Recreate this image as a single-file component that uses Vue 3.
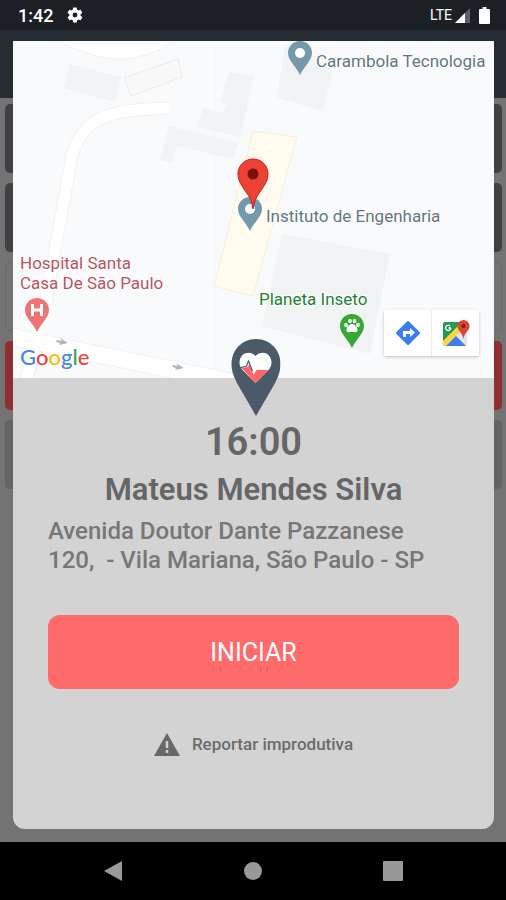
<template>
  <div class="screen">
    <!-- 系统状态栏 -->
    <header class="status-bar">
      <div class="status-group">
        <span class="clock">1:42</span>
        <svg class="gear" viewBox="0 0 24 24" aria-hidden="true">
          <path d="M19.4 13a7.5 7.5 0 0 0 0-2l2.1-1.6a.5.5 0 0 0 .1-.7l-2-3.4a.5.5 0 0 0-.6-.2l-2.5 1a7.3 7.3 0 0 0-1.7-1l-.4-2.6a.5.5 0 0 0-.5-.5h-4a.5.5 0 0 0-.5.5L9 5.1a7.3 7.3 0 0 0-1.7 1l-2.5-1a.5.5 0 0 0-.6.2l-2 3.4a.5.5 0 0 0 .1.7L4.5 11a7.5 7.5 0 0 0 0 2l-2.1 1.6a.5.5 0 0 0-.1.7l2 3.4c.1.2.4.3.6.2l2.5-1a7.3 7.3 0 0 0 1.7 1l.4 2.6c0 .3.2.5.5.5h4c.3 0 .5-.2.5-.5l.4-2.6a7.3 7.3 0 0 0 1.7-1l2.5 1c.2.1.5 0 .6-.2l2-3.4a.5.5 0 0 0-.1-.7zM12 15.2a3.2 3.2 0 1 1 0-6.4 3.2 3.2 0 0 1 0 6.4z" />
        </svg>
      </div>
      <div class="status-group right">
        <span class="network">LTE</span>
        <svg class="signal" viewBox="0 0 15 15" aria-hidden="true">
          <path d="M15 0V15H0z" fill="#5c6063" />
          <path d="M10 5V15H0z" fill="#fff" />
        </svg>
        <svg class="battery" viewBox="0 0 11 17" aria-hidden="true">
          <path d="M3.5 0h4v2H10a1 1 0 0 1 1 1v13a1 1 0 0 1-1 1H1a1 1 0 0 1-1-1V3a1 1 0 0 1 1-1h2.5z" fill="#fff" />
        </svg>
      </div>
    </header>

    <main class="stage">
      <!-- 弹窗后面的列表 -->
      <div class="backdrop" aria-hidden="true">
        <div class="app-bar"></div>
        <div class="rows">
          <div v-for="(row, index) in rows" :key="index" class="row" :class="row"></div>
        </div>
      </div>

      <!-- 预约弹窗 -->
      <section class="modal">
        <div class="map">
          <svg class="map-canvas" viewBox="0 0 481 337" role="img" aria-label="Mapa">
            <defs>
              <!-- 通用地点标记，尖端位于 (12, 34) -->
              <path id="poi" d="M12 0C5.3 0 0 5.2 0 11.8c0 4.6 2.2 7.6 5.2 11.6 2.8 3.7 5 6.6 6.8 10.6 1.8-4 4-6.9 6.8-10.6 3-4 5.2-7 5.2-11.6C24 5.2 18.7 0 12 0z" />
            </defs>
            <rect width="481" height="337" fill="#f8fafb" />

            <!-- 建筑 -->
            <g fill="#f1f3f4">
              <path d="M57 23l51 13-6 25-51-14z" />
              <path d="M216 31l25 4-14 61-43-10 6-19 20 5 4-9-7-2z" />
              <path d="M156 85l69 17-5 16-56-13-5 17-12-3z" />
              <path d="M272 4l48 24-10 42-46-13z" />
              <path d="M269 193l108 20-20 100-108-28z" />
            </g>
            <path d="M111 37l54-19 4 18-51 19z" fill="#f9f9f9" stroke="#ebebeb" />
            <path d="M240 90l44 6-44 159-39-10z" fill="#fffbee" stroke="#f6eeda" />

            <!-- 道路 -->
            <path d="M202 6V337" stroke="#f3f5f6" fill="none" />
            <g fill="none" stroke="#f0f1f2">
              <path d="M156 67c-60 2-85 8-97 47-8 46-16 90-26 145" stroke-width="13" />
              <path d="M-5 295l240 49" stroke-width="18" />
              <path d="M26 295L12 345" stroke-width="14" />
            </g>
            <g fill="none" stroke="#fff">
              <path d="M156 67c-60 2-85 8-97 47-8 46-16 90-26 145l-11 45-10 41" stroke-width="11" />
              <path d="M-5 295l240 49" stroke-width="16" />
            </g>
            <path d="M52 4c20 7 32 14 54 14s35-7 50-14z" fill="#fff" />
            <path d="M52 4c20 7 32 14 54 14s35-7 50-14" fill="none" stroke="#eff0f1" />
            <g fill="#aeb5bd">
              <path d="M44 299l5 1-2-3 8 5-9 2 1-2-4-1z" />
              <path d="M160 324l5 1-2-3 8 5-9 2 1-2-4-1z" />
            </g>

            <!-- 地点标记 -->
            <g transform="translate(275 0)">
              <use href="#poi" fill="#7499aa" />
              <circle cx="12" cy="12" r="5" fill="#fff" />
            </g>
            <g transform="translate(225 156)">
              <use href="#poi" fill="#7499aa" />
              <circle cx="12" cy="12" r="5" fill="#fff" />
            </g>
            <g transform="translate(12 257)">
              <use href="#poi" fill="#ef7476" />
              <path d="M7.5 6v12M16.5 6v12M7.5 12h9" fill="none" stroke="#fff" stroke-width="3" />
            </g>
            <g transform="translate(327 273)">
              <use href="#poi" fill="#36a933" />
              <g fill="#fff">
                <ellipse cx="6" cy="11" rx="1.8" ry="2.3" />
                <ellipse cx="10" cy="7" rx="1.8" ry="2.3" />
                <ellipse cx="14.5" cy="7" rx="1.8" ry="2.3" />
                <ellipse cx="18" cy="11" rx="1.8" ry="2.3" />
                <path d="M12 10c-3 0-6 4-5.5 6.5.4 2.5 3 1.5 5.5 1.5s5.1 1 5.5-1.5C18 14 15 10 12 10z" />
              </g>
            </g>
            <path d="M240 118c-9 0-15 7-15 15 0 7 4 12 8 18 4 5 6 10 7 17 1-7 3-12 7-17 4-6 8-11 8-18 0-8-6-15-15-15z" fill="#ea4335" stroke="#c5221f" />
            <circle cx="240" cy="133" r="5.5" fill="#7d110c" />

            <!-- 地点名称 -->
            <g class="labels">
              <text x="303" y="26" fill="#5f7680">Carambola Tecnologia</text>
              <text x="253" y="181" fill="#5f7680">Instituto de Engenharia</text>
              <text x="7" y="228" fill="#b9545c">Hospital Santa</text>
              <text x="7" y="248" fill="#b9545c">Casa De São Paulo</text>
              <text x="246" y="264" fill="#1f8132">Planeta Inseto</text>
            </g>
            <text class="google" x="7" y="324"><tspan fill="#4285f4">G</tspan><tspan fill="#ea4335">o</tspan><tspan fill="#fbbc05">o</tspan><tspan fill="#4285f4">g</tspan><tspan fill="#34a853">l</tspan><tspan fill="#ea4335">e</tspan></text>
          </svg>

          <div class="map-tools">
            <button type="button" class="map-tool" aria-label="Rotas">
              <svg viewBox="0 0 26 26" aria-hidden="true">
                <path d="M12 1.4a1.4 1.4 0 0 1 2 0L24.6 12a1.4 1.4 0 0 1 0 2L14 24.6a1.4 1.4 0 0 1-2 0L1.4 14a1.4 1.4 0 0 1 0-2z" fill="#3b7ded" />
                <path d="M8 17v-6h7V8l5 4.5-5 4.5v-3h-4v3z" fill="#fff" />
              </svg>
            </button>
            <button type="button" class="map-tool" aria-label="Abrir no Google Maps">
              <svg viewBox="0 0 28 28" aria-hidden="true">
                <rect x="1" y="3" width="24" height="24" rx="2" fill="#e3e6ea" />
                <path d="M3 3h19L1 24V5a2 2 0 0 1 2-2z" fill="#249a57" />
                <path d="M1 22L19 4l4 4L4 27H3a2 2 0 0 1-2-2z" fill="#fcd545" />
                <path d="M14 17l4-4 7 7v5a2 2 0 0 1-1 2z" fill="#e3e6ea" />
                <path d="M4 27l10-10 10 10z" fill="#3f7de8" />
                <path d="M9 9H6.5M8.8 9A2.6 2.6 0 1 1 8 7" fill="none" stroke="#fff" stroke-width="1.3" />
                <path d="M21.5 1a6 6 0 0 0-6 6c0 5 5 6 6 13 1-7 6-8 6-13a6 6 0 0 0-6-6z" fill="#dc4436" />
                <circle cx="21.5" cy="7" r="2" fill="#7d1c16" />
              </svg>
            </button>
          </div>

          <svg class="heart-pin" viewBox="0 0 53 77" aria-hidden="true">
            <path d="M28.5 0C14.5 0 4 11 4 25c0 8 3 14 6 20l18.5 32L47 45c3-6 6-12 6-20C53 11 42.5 0 28.5 0z" fill="#4b5a68" />
            <path d="M28 44L15 31c-4-4-4-11 0-15 4-3 9-3 13 1 4-4 10-4 13-1 4 4 4 11 0 15z" fill="#fff" />
            <path d="M14 29l6-1 2-3 4 11 3-5h12L28 44z" fill="#ff6568" />
            <path d="M12 29l7-2 2-5 4 10" fill="none" stroke="#4b5a68" stroke-width="1.2" />
          </svg>
        </div>

        <div class="details">
          <h1 class="time">{{ visit.time }}</h1>
          <h2 class="patient">{{ visit.patient }}</h2>
          <address class="address">{{ visit.address }}</address>
          <button type="button" class="start">INICIAR</button>
          <button type="button" class="report">
            <svg viewBox="0 0 26 23" aria-hidden="true">
              <path d="M13 0l13 23H0z" fill="#686868" />
              <path d="M13 8v7M13 17v3" stroke="#d3d3d3" stroke-width="2.5" />
            </svg>
            <span>Reportar improdutiva</span>
          </button>
        </div>
      </section>
    </main>

    <!-- 系统导航栏 -->
    <nav class="nav-bar">
      <button type="button" aria-label="Voltar">
        <svg viewBox="0 0 20 20"><path d="M19 0v20L1 10z" /></svg>
      </button>
      <button type="button" aria-label="Início">
        <svg viewBox="0 0 20 20"><circle cx="10" cy="10" r="9" /></svg>
      </button>
      <button type="button" aria-label="Recentes">
        <svg viewBox="0 0 20 20"><rect width="20" height="20" rx="1" /></svg>
      </button>
    </nav>
  </div>
</template>

<script setup>
import { ref } from 'vue'

/** 背景列表每一行的状态 */
const rows = ref(['done', 'done', 'empty', 'late', 'pending'])

/** 当前预约信息 */
const visit = ref({
  time: '16:00',
  patient: 'Mateus Mendes Silva',
  address: 'Avenida Doutor Dante Pazzanese\n120,  - Vila Mariana, São Paulo - SP'
})
</script>

<style>
body {
  margin: 0;
  background: #000;
}
</style>

<style scoped>
.screen {
  display: flex;
  flex-direction: column;
  min-height: 100vh;
  font-family: Roboto, "Liberation Sans", sans-serif;
}

button {
  padding: 0;
  border: 0;
  background: none;
  font-family: inherit;
  cursor: pointer;
}

svg {
  display: block;
}

.status-bar {
  display: flex;
  align-items: center;
  justify-content: space-between;
  height: 30px;
  padding: 0 16px 0 18px;
  background: #1c2024;
  color: #fff;
}

.status-group {
  display: flex;
  align-items: center;
  gap: 13px;
}

.status-group.right {
  gap: 3px;
}

.clock {
  font-size: 18px;
  font-weight: 500;
}

.gear {
  width: 18px;
  height: 18px;
  fill: #fff;
}

.network {
  font-size: 14px;
}

.signal {
  width: 15px;
  height: 15px;
}

.battery {
  width: 11px;
  height: 17px;
  margin-left: 6px;
}

.stage {
  display: grid;
  flex: 1;
  background: #737373;
}

.backdrop,
.modal {
  grid-area: 1 / 1;
}

.app-bar {
  height: 68px;
  background: #252d33;
}

.rows {
  display: grid;
  gap: 10px;
  padding: 6px 4px 0 5px;
}

.row {
  height: 69px;
  border-radius: 5px;
  box-sizing: border-box;
}

.row.done {
  background: #404145;
}

.row.empty {
  border: 1px solid #696969;
}

.row.late {
  background: #8f2f32;
}

.row.pending {
  background: #646464;
}

.modal {
  display: flex;
  flex-direction: column;
  margin: 11px 12px 13px 13px;
  border-radius: 0 0 12px 12px;
  background: #d3d3d3;
}

.map {
  position: relative;
}

.map-canvas {
  width: 100%;
  height: auto;
}

.labels {
  font-size: 17px;
  paint-order: stroke;
  stroke: #fff;
  stroke-width: 2px;
}

.google {
  font-family: Lato, Roboto, sans-serif;
  font-size: 22px;
  font-weight: 500;
  paint-order: stroke;
  stroke: #fff;
  stroke-width: 2px;
}

.map-tools {
  position: absolute;
  right: 15px;
  bottom: 22px;
  display: flex;
  gap: 1px;
  border-radius: 2px;
  background: #e9ebec;
  box-shadow: 0 1px 3px rgba(0, 0, 0, 0.25);
}

.map-tool {
  display: grid;
  place-items: center;
  width: 47px;
  height: 46px;
  background: #fff;
}

.map-tool svg {
  width: 26px;
  height: 26px;
}

.map-tool + .map-tool svg {
  width: 28px;
  height: 28px;
}

.heart-pin {
  position: absolute;
  left: 50%;
  bottom: -38px;
  width: 53px;
  height: 77px;
  transform: translateX(-50%);
}

.details {
  display: flex;
  flex: 1;
  flex-direction: column;
  padding: 40px 35px;
  color: #666;
}

.time {
  margin: 0;
  font-size: 38px;
  font-weight: 600;
  line-height: 48px;
  text-align: center;
}

.patient {
  margin: 4px 0 0;
  font-size: 31px;
  font-weight: 600;
  line-height: 40px;
  text-align: center;
}

.address {
  margin-top: 7px;
  color: #777;
  font-size: 24px;
  font-style: normal;
  font-weight: 500;
  line-height: 29px;
  white-space: pre-wrap;
}

.start {
  height: 74px;
  margin-top: 40px;
  border-radius: 12px;
  background: #ff6b6b;
  color: #fff;
  font-size: 25px;
}

.report {
  display: flex;
  align-items: center;
  align-self: center;
  gap: 12px;
  margin-top: 42px;
  color: #6c6c6c;
  font-size: 17px;
  font-weight: 500;
  line-height: 26px;
}

.report svg {
  width: 26px;
  height: 23px;
}

.nav-bar {
  display: flex;
  align-items: center;
  justify-content: center;
  gap: 120px;
  height: 58px;
  background: #000;
}

.nav-bar svg {
  width: 20px;
  height: 20px;
  fill: #999;
}
</style>
